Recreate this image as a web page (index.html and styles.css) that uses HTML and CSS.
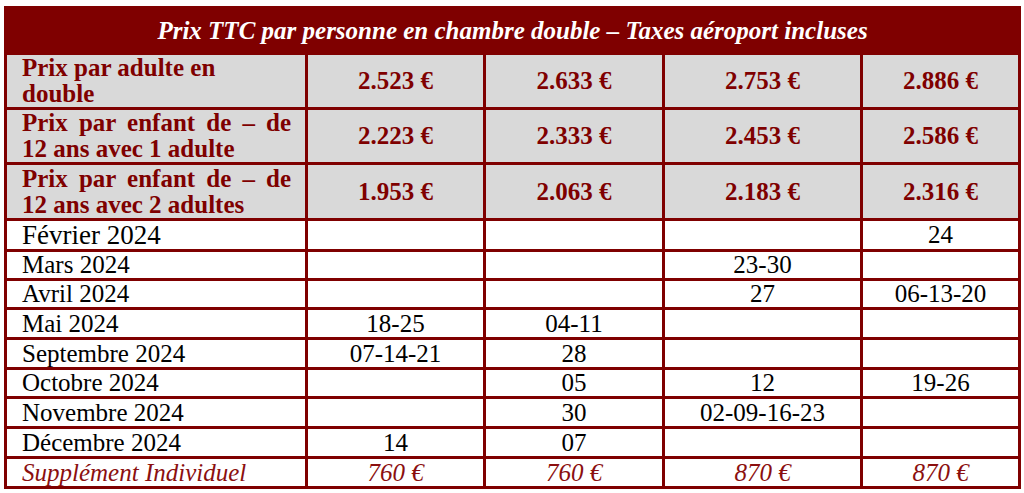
FILE: index.html
```html
<!DOCTYPE html>
<html lang="fr">
<head>
<meta charset="utf-8">
<title>Prix TTC</title>
<link rel="stylesheet" href="styles.css">
</head>
<body>
<div class="wrap">
<table class="prices">
  <colgroup>
    <col class="c1"><col class="c2"><col class="c3"><col class="c4"><col class="c5">
  </colgroup>
  <tr class="head"><th colspan="5">Prix TTC par personne en chambre double – Taxes aéroport incluses</th></tr>
  <tr class="price r1"><td class="label left">Prix par adulte en double</td><td>2.523 €</td><td>2.633 €</td><td>2.753 €</td><td>2.886 €</td></tr>
  <tr class="price r2"><td class="label">Prix par enfant de – de 12 ans avec 1 adulte</td><td>2.223 €</td><td>2.333 €</td><td>2.453 €</td><td>2.586 €</td></tr>
  <tr class="price r3"><td class="label">Prix par enfant de – de 12 ans avec 2 adultes</td><td>1.953 €</td><td>2.063 €</td><td>2.183 €</td><td>2.316 €</td></tr>
  <tr class="month big"><td class="mlabel">Février 2024</td><td></td><td></td><td></td><td>24</td></tr>
  <tr class="month"><td class="mlabel">Mars 2024</td><td></td><td></td><td>23-30</td><td></td></tr>
  <tr class="month"><td class="mlabel">Avril 2024</td><td></td><td></td><td>27</td><td>06-13-20</td></tr>
  <tr class="month m30"><td class="mlabel">Mai 2024</td><td>18-25</td><td>04-11</td><td></td><td></td></tr>
  <tr class="month m30"><td class="mlabel">Septembre 2024</td><td>07-14-21</td><td>28</td><td></td><td></td></tr>
  <tr class="month"><td class="mlabel">Octobre 2024</td><td></td><td>05</td><td>12</td><td>19-26</td></tr>
  <tr class="month m30"><td class="mlabel">Novembre 2024</td><td></td><td>30</td><td>02-09-16-23</td><td></td></tr>
  <tr class="month m30"><td class="mlabel">Décembre 2024</td><td>14</td><td>07</td><td></td><td></td></tr>
  <tr class="month m30 supp"><td class="mlabel">Supplément Individuel</td><td>760 €</td><td>760 €</td><td>870 €</td><td>870 €</td></tr>
</table>
</div>
</body>
</html>
```

FILE: styles.css
```css
html, body {
  margin: 0;
  padding: 0;
  background: #ffffff;
}

.wrap {
  padding: 6px 6px 0 4px;
}

.prices {
  width: 1014px;
  table-layout: fixed;
  border-collapse: collapse;
  font-family: "Liberation Serif", "Times New Roman", serif;
  font-size: 25px;
}

.c1 { width: 301px; }
.c2 { width: 178px; }
.c3 { width: 179px; }
.c4 { width: 198px; }
.c5 { width: 158px; }

.prices th,
.prices td {
  border: 3px solid #7f0000;
  padding: 0;
  text-align: center;
  vertical-align: middle;
}

.head th {
  background: #7f0000;
  color: #ffffff;
  font-style: italic;
  font-weight: bold;
  font-size: 25px;
  height: 43px;
  line-height: 28px;
}

.price td {
  background: #d9d9d9;
  color: #7f0000;
  font-weight: bold;
  line-height: 26px;
}

.r1 td, .r2 td { height: 52px; }
.r3 td { height: 53px; }

.price td.label {
  text-align: justify;
  padding: 0 14px 0 15px;
}

.price td.label.left {
  text-align: left;
}

.month td {
  color: #000000;
  height: 26px;
  line-height: 24px;
}

.month.m30 td { height: 27px; }

.month.big td { height: 28px; }
.month.big td.mlabel { font-size: 27px; }

.month td.mlabel {
  text-align: left;
  padding-left: 15px;
}

.supp td {
  color: #8b0f0f;
  font-style: italic;
}
```
